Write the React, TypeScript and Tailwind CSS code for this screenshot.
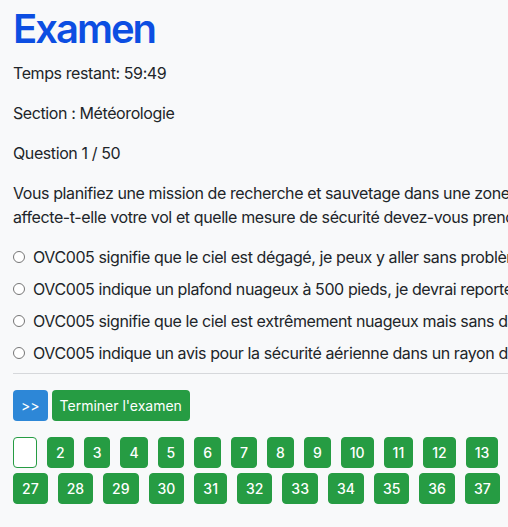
import { useState } from "react";

const options = [
  "OVC005 signifie que le ciel est dégagé, je peux y aller sans problème et garder le même plan de vol.",
  "OVC005 indique un plafond nuageux à 500 pieds, je devrai reporter la mission ou la faire en IFR.",
  "OVC005 signifie que le ciel est extrêmement nuageux mais sans danger pour un vol à vue.",
  "OVC005 indique un avis pour la sécurité aérienne dans un rayon de 5 milles nautiques.",
];

const questions = Array.from({ length: 50 }, (_, i) => i + 1);

export default function App() {
  const [selected, setSelected] = useState<number | null>(null);
  const current = 1;

  return (
    <div className="min-h-screen w-full overflow-hidden bg-[#f8f9fa] text-[#212529] tracking-[-0.025em] font-['Inter','Liberation_Sans',sans-serif]">
      <div className="w-[1126px] px-[13px] pt-[5px]">
        <h1 className="mb-2 text-[40px] leading-[48px] font-semibold tracking-[-0.05em] text-[#0c4ee2]">Examen</h1>
        <p className="mb-4 text-base leading-6">Temps restant: 59:49</p>
        <p className="mb-4 text-base leading-6">Section : Météorologie</p>
        <p className="mb-4 text-base leading-6">Question {current} / 50</p>

        <p className="mb-4 w-[1040px] text-base leading-6">
          Vous planifiez une mission de recherche et sauvetage dans une zone montagneuse. Le METAR indique OVC005. Comment cette couche
          affecte-t-elle votre vol et quelle mesure de sécurité devez-vous prendre ?
        </p>

        <div>
          {options.map((opt, i) => (
            <label key={i} className="mb-2 flex items-center gap-2 text-base leading-6">
              <input
                type="radio"
                name="answer"
                checked={selected === i}
                onChange={() => setSelected(i)}
                className="h-3 w-3 shrink-0 appearance-none rounded-full border border-[#767676] bg-white checked:border-[4px] checked:border-[#0c4ee2]"
              />
              <span className="whitespace-nowrap">{opt}</span>
            </label>
          ))}
        </div>

        <hr className="mb-4 border-t border-[#d6d8db]" />

        <div className="mb-4 flex gap-1 tracking-normal">
          <button className="h-[31px] rounded px-2 text-sm text-white bg-[#2d87d7]">&gt;&gt;</button>
          <button className="h-[31px] rounded px-2 text-sm text-white bg-[#269c43]">Terminer l'examen</button>
        </div>

        <div className="flex flex-wrap gap-x-[10px] gap-y-[5px] tracking-normal">
          {questions.map((n) => (
            <button
              key={n}
              className={
                n === current
                  ? "h-[31px] min-w-[24px] rounded border border-[#269c43] bg-white px-2 text-sm text-white"
                  : "h-[31px] rounded border border-[#269c43] bg-[#269c43] px-2 text-sm font-medium text-white"
              }
            >
              {n}
            </button>
          ))}
        </div>
      </div>
    </div>
  );
}
